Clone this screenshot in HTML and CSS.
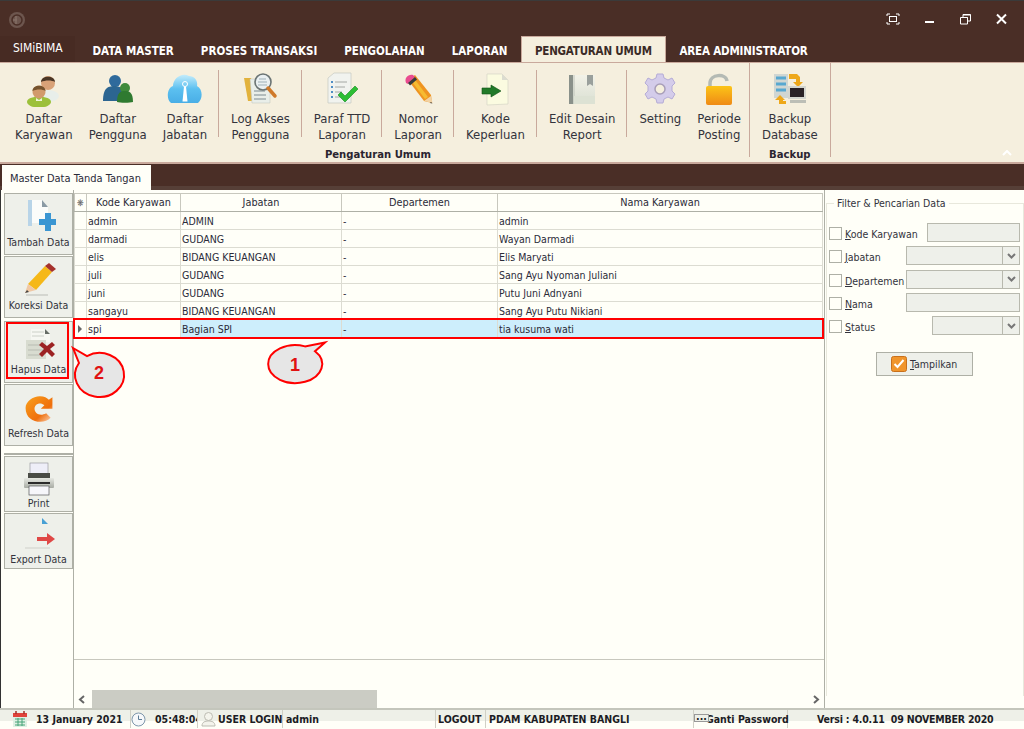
FILE: index.html
```html
<!DOCTYPE html>
<html lang="id">
<head>
<meta charset="utf-8">
<title>SIMiBIMA</title>
<link rel="stylesheet" href="styles.css">
</head>
<body>
<svg class="defs" width="0" height="0" aria-hidden="true">
  <defs>
    <linearGradient id="gBlue" x1="0" y1="0" x2="0" y2="1"><stop offset="0" stop-color="#c4ecfb"/><stop offset=".5" stop-color="#5cc0f0"/><stop offset="1" stop-color="#49aee6"/></linearGradient>
    <linearGradient id="gOrange" x1="0" y1="0" x2="0" y2="1"><stop offset="0" stop-color="#fcc417"/><stop offset="1" stop-color="#ef8a16"/></linearGradient>
    <linearGradient id="gRefresh" x1="0" y1="0" x2="1" y2="1"><stop offset="0" stop-color="#f9a11c"/><stop offset=".65" stop-color="#ef6f0c"/><stop offset="1" stop-color="#fbd9c0"/></linearGradient>
    <linearGradient id="gBook" x1="0" y1="0" x2="0" y2="1"><stop offset="0" stop-color="#f2f2e8"/><stop offset="1" stop-color="#dadfd2"/></linearGradient>
    <linearGradient id="gGrey" x1="0" y1="0" x2="0" y2="1"><stop offset="0" stop-color="#e6e8e2"/><stop offset="1" stop-color="#a8aca4"/></linearGradient>
  </defs>
</svg>
<div class="app">
  <header class="titlebar">
    <svg class="logo" width="18" height="18" viewBox="0 0 18 18"><circle cx="9" cy="9" r="8" fill="#6d564e"/><circle cx="9" cy="9" r="5" fill="none" stroke="#4a2e26" stroke-width="1.500"/><path d="M8 5v8M5 9h4" stroke="#836d64" stroke-width="1.500"/></svg>
    <div class="winctl">
      <svg width="14" height="12" viewBox="0 0 14 12"><path d="M1 3V1h3M10 1h3v2M13 9v2h-3M4 11H1V9" fill="none" stroke="#fff"/><rect x="3.500" y="3.500" width="7" height="5" fill="none" stroke="#fff"/></svg>
      <svg width="10" height="12" viewBox="0 0 10 12"><rect x="0" y="8" width="9" height="2" fill="#fff"/></svg>
      <svg width="11" height="12" viewBox="0 0 11 12"><path d="M.5 4.500h7v6.500h-7zM3 4V1.500h7.500V8H8" fill="none" stroke="#fff"/><path d="M1 4.500h6.500M3 2h7.500" stroke="#fff"/></svg>
      <svg width="11" height="12" viewBox="0 0 11 12"><path d="M1 1.500l9 9M10 1.500l-9 9" stroke="#fff" stroke-width="2"/></svg>
    </div>
  </header>
  <nav class="tabs">
    <div class="tab-app">SIMiBIMA</div>
    <div class="tab">DATA MASTER</div>
    <div class="tab">PROSES TRANSAKSI</div>
    <div class="tab">PENGOLAHAN</div>
    <div class="tab">LAPORAN</div>
    <div class="tab tab-active">PENGATURAN UMUM</div>
    <div class="tab tab-tight">AREA ADMINISTRATOR</div>
  </nav>
  <section class="ribbon">
    <div class="group">
      <div class="group-row">
        <div class="ritem">
          <svg class="ricon" width="36" height="36" viewBox="0 0 36 36"><ellipse cx="22" cy="25" rx="11" ry="6" fill="#e8eeea"/><circle cx="22" cy="12" r="7" fill="#d9a278"/><path d="M15 11c0-7 14-7 14 0-3-2-10-2-14 0z" fill="#4a3626"/><ellipse cx="13" cy="31" rx="12" ry="5.500" fill="#9cc03a"/><circle cx="13" cy="21" r="6.500" fill="#d19a6c"/><path d="M6.500 20c0-7 13-7 13 0-3-2-9-2-13 0z" fill="#75522c"/><path d="M10 27l3 2 3-2v3h-6z" fill="#eef4d8"/></svg>
          <span class="rlabel">Daftar<br>Karyawan</span>
        </div>
        <div class="ritem">
          <svg class="ricon" width="36" height="36" viewBox="0 0 36 36"><circle cx="15" cy="10" r="6" fill="#2f6a9c"/><path d="M3 30c0-14 6-15 12-15s10 3 10 15z" fill="#2c6591"/><circle cx="25" cy="17" r="5" fill="#3f8a3a"/><path d="M17 31c0-10 4-11 8-11s8 1 8 11c-3 1-13 1-16 0z" fill="#2f7a30"/></svg>
          <span class="rlabel">Daftar<br>Pengguna</span>
        </div>
        <div class="ritem">
          <svg class="ricon" width="36" height="36" viewBox="0 0 36 36"><path d="M4 32C-1 28 0 17 6 15 6 7 15 1 22 5c6 0 9 5 8 10 6 3 6 13 1 17z" fill="url(#gBlue)"/><circle cx="18" cy="13" r="2.500" fill="none" stroke="#fff"/><path d="M17 15.500h2l1.500 15h-5z" fill="#fff"/></svg>
          <span class="rlabel">Daftar<br>Jabatan</span>
        </div>
        <div class="rsep"></div>
        <div class="ritem">
          <svg class="ricon" width="36" height="36" viewBox="0 0 36 36"><path d="M2 7h7l1 3v20H6z" fill="#e2b23c"/><path d="M8 8h14l6 6v18H10z" fill="#e9eee9" stroke="#bcc0b8" stroke-width=".5"/><path d="M12 20h11M12 24h12M12 28h12" stroke="#7d8a90"/><circle cx="21" cy="11" r="8" fill="#eaf0f2" stroke="#6b7474" stroke-width="1.600"/><path d="M16 11h9M16 14h9M17 8h7" stroke="#9fb0b8"/><path d="M26 17l7 8" stroke="#d07a2a" stroke-width="3.500" stroke-linecap="round"/></svg>
          <span class="rlabel">Log Akses<br>Pengguna</span>
        </div>
        <div class="rsep"></div>
        <div class="ritem">
          <svg class="ricon" width="36" height="36" viewBox="0 0 36 36"><path d="M4 7l6-5h17v30H4z" fill="#f1f3ef" stroke="#c4c8c2" stroke-width=".7"/><path d="M7 10h2v2H7zM7 15h2v2H7zM7 20h2v2H7zM7 25h2v2H7z" fill="#4f8ec4"/><path d="M11 11h12M11 16h10M11 21h7M11 26h5" stroke="#a4a8a4"/><path d="M14 24l3-3 4 4 10-10 3 3-13 13z" fill="#2dbe34" stroke="#148a1e" stroke-width=".6"/></svg>
          <span class="rlabel">Paraf TTD<br>Laporan</span>
        </div>
        <div class="rsep"></div>
        <div class="ritem">
          <svg class="ricon" width="36" height="36" viewBox="0 0 36 36"><path d="M8 9l7-5 16 20 1 8-8-2z" fill="#ef9420"/><path d="M13 6l-3 2 15 20 3-2z" fill="#f6bb30"/><path d="M24 30l7-5 1.500 7z" fill="#f1d2a4"/><path d="M31 31l1.500 1.500-2.500-.5z" fill="#333"/><path d="M6 12c-2-5 2-9 7-8l2 2-7 7z" fill="#e94c8f"/><path d="M8 12l7-6 2 2.500-7 6z" fill="#3a3a3a"/></svg>
          <span class="rlabel">Nomor<br>Laporan</span>
        </div>
        <div class="rsep"></div>
        <div class="ritem">
          <svg class="ricon" width="36" height="36" viewBox="0 0 36 36"><path d="M10 3h15l6 6v24l-21 1z" fill="#fbfbe0" stroke="#d6d6c6" stroke-width=".7"/><path d="M25 3v6h6z" fill="#dcdcd0"/><path d="M5 17h9v-3l10 6-10 6v-3H5z" fill="#217a28" stroke="#0f5216" stroke-width=".6"/></svg>
          <span class="rlabel">Kode<br>Keperluan</span>
        </div>
        <div class="rsep"></div>
        <div class="ritem">
          <svg class="ricon" width="36" height="36" viewBox="0 0 36 36"><rect x="5" y="4" width="26" height="29" fill="url(#gBook)"/><rect x="5" y="4" width="4" height="29" fill="#8a918a"/><path d="M10 4v29" stroke="#bfc4ba"/><path d="M23 4h6v11l-3-2-3 2z" fill="#9aa09c"/><rect x="10" y="25" width="21" height="8" fill="#dde2d4"/></svg>
          <span class="rlabel">Edit Desain<br>Report</span>
        </div>
        <div class="rsep"></div>
        <div class="ritem">
          <svg class="ricon" width="36" height="36" viewBox="0 0 36 36"><path d="M15 3h6l1 4 4 2 4-2 3 5-3 3v5l3 3-3 5-4-2-4 2-1 4h-6l-1-4-4-2-4 2-3-5 3-3v-5l-3-3 3-5 4 2 4-2z" fill="#d4ccea" stroke="#b5acd6"/><circle cx="18" cy="18" r="5" fill="#f5efde" stroke="#a89eb8" stroke-width="1.500"/></svg>
          <span class="rlabel">Setting</span>
        </div>
        <div class="ritem">
          <svg class="ricon" width="36" height="36" viewBox="0 0 36 36"><path d="M9 17v-5c0-9 16-10 17-2" fill="none" stroke="#b4bab4" stroke-width="3.500"/><rect x="5" y="15" width="26" height="19" rx="2" fill="url(#gOrange)"/></svg>
          <span class="rlabel">Periode<br>Posting</span>
        </div>
      </div>
      <div class="group-name">Pengaturan Umum</div>
    </div>
    <div class="gsep"></div>
    <div class="group">
      <div class="group-row">
        <div class="ritem ritem-wide">
          <svg class="ricon" width="36" height="36" viewBox="0 0 36 36"><rect x="2" y="3" width="14" height="24" fill="#d0d6d2"/><path d="M4 7h10M4 13h10M4 19h10" stroke="#58a8d0" stroke-width="3"/><path d="M17 3h8l3 3v5h3l-5 5-5-5h3V8h-7z" fill="#eea81a"/><rect x="16" y="15" width="18" height="13" fill="#d4d6cf"/><rect x="18" y="17" width="14" height="9" fill="#2a2226"/><rect x="18" y="29" width="16" height="3" fill="#bcbeb6"/><path d="M14 33H7v-4H3l5-5 5 5h-2v1h3z" fill="#eea81a"/></svg>
          <span class="rlabel">Backup<br>Database</span>
        </div>
      </div>
      <div class="group-name">Backup</div>
    </div>
    <div class="gsep"></div>
    <svg class="collapse" width="10" height="6" viewBox="0 0 10 6"><path d="M1 5l4-4 4 4" fill="none" stroke="#fff" stroke-width="2"/></svg>
  </section>
  <div class="doctabs">
    <div class="doctab">Master Data Tanda Tangan</div>
  </div>
  <main class="content">
    <aside class="toolbar">
      <div class="tool">
        <svg width="34" height="34" viewBox="0 0 34 34"><path d="M6 1h14l6 7v16H6z" fill="#fbfcfa"/><rect x="6" y="1" width="4" height="26" fill="#b8d4e8"/><path d="M20 1l6 7h-6z" fill="#8a9aa4"/><path d="M17 20h6v-6h6v6h5v6h-5v6h-6v-6h-6z" fill="#3b96d2"/></svg>
        <span>Tambah Data</span>
      </div>
      <div class="tool">
        <svg width="34" height="34" viewBox="0 0 34 34"><path d="M23 4l7 6-16 18-8-6z" fill="#f5b818"/><path d="M23 4l4-3 7 6-4 3z" fill="#a5312c"/><path d="M6 22l8 6-11 3z" fill="#f0c8a4"/><path d="M3 31L5 28 7 30z" fill="#444"/><path d="M4 33h22" stroke="#d4d6d0" stroke-width="2"/></svg>
        <span>Koreksi Data</span>
      </div>
      <div class="tool tool-gap">
        <svg width="34" height="34" viewBox="0 0 34 34"><path d="M9 3h14l5 5v8H9z" fill="#f6f7f2"/><path d="M23 3l5 5h-5z" fill="#666c66"/><path d="M10 6h12M10 10h12" stroke="#ccd0c8"/><rect x="4" y="14" width="20" height="19" fill="#d8dcd0"/><path d="M6 19h16M6 24h16M6 29h16" stroke="#b8bcb2"/><path d="M20 16l5 4 5-4 3 3-5 4 5 5-3 3-5-5-5 5-3-3 5-5-5-4z" fill="#9c2323"/></svg>
        <span>Hapus Data</span>
      </div>
      <div class="tool">
        <svg width="34" height="34" viewBox="-3 -4 38 38"><path d="M17 3c5 0 8 2 10 4l4-3v13H18l4-4c-5-4-11-1-11 4s6 9 13 5l5 5c-7 8-28 6-28-11C1 9 9 3 17 3z" fill="url(#gRefresh)"/></svg>
        <span>Refresh Data</span>
      </div>
      <div class="tool-spacer"></div>
      <div class="tool tool-short">
        <svg width="34" height="34" viewBox="0 0 34 34"><rect x="8" y="1" width="18" height="12" fill="#eeeef8" stroke="#8c8e94" stroke-width=".6"/><rect x="6" y="11" width="22" height="6" fill="#4a4c46"/><rect x="2" y="16" width="30" height="10" rx="1" fill="url(#gGrey)"/><rect x="6" y="20" width="22" height="2" fill="#2a2a2a"/><rect x="7" y="24" width="20" height="9" fill="#f6f6fa" stroke="#56585a" stroke-width=".7"/></svg>
        <span>Print</span>
      </div>
      <div class="tool tool-short tool-export">
        <svg width="34" height="34" viewBox="0 0 34 34"><path d="M20 0l6 6h-6z" fill="#48a0d4"/><path d="M15 19h10v-4l8 6-8 6v-4H15z" fill="#df4846"/><path d="M3 30h25" stroke="#cfd0ca"/></svg>
        <span>Export Data</span>
      </div>
    </aside>
    <section class="gridpane">
      <table class="grid">
        <colgroup><col class="c0"><col class="c1"><col class="c2"><col class="c3"><col></colgroup>
        <thead>
          <tr><th class="star">❋</th><th>Kode Karyawan</th><th>Jabatan</th><th>Departemen</th><th>Nama Karyawan</th></tr>
        </thead>
        <tbody>
          <tr><td></td><td>admin</td><td>ADMIN</td><td>-</td><td>admin</td></tr>
          <tr><td></td><td>darmadi</td><td>GUDANG</td><td>-</td><td>Wayan Darmadi</td></tr>
          <tr><td></td><td>elis</td><td>BIDANG KEUANGAN</td><td>-</td><td>Elis Maryati</td></tr>
          <tr><td></td><td>juli</td><td>GUDANG</td><td>-</td><td>Sang Ayu Nyoman Juliani</td></tr>
          <tr><td></td><td>juni</td><td>GUDANG</td><td>-</td><td>Putu Juni Adnyani</td></tr>
          <tr><td></td><td>sangayu</td><td>BIDANG KEUANGAN</td><td>-</td><td>Sang Ayu Putu Nikiani</td></tr>
          <tr class="sel"><td class="ind"><span class="arrow"></span></td><td class="focus">spi</td><td>Bagian SPI</td><td>-</td><td>tia kusuma wati</td></tr>
        </tbody>
      </table>
      <div class="grid-empty"></div>
      <div class="grid-footer"></div>
      <div class="hscroll">
        <svg class="sarrow" width="7" height="9" viewBox="0 0 7 9"><path d="M6 1L2 4.500 6 8" fill="none" stroke="#666" stroke-width="2"/></svg>
        <div class="track"><div class="thumb"></div></div>
        <svg class="sarrow" width="7" height="9" viewBox="0 0 7 9"><path d="M1 1l4 3.500L1 8" fill="none" stroke="#666" stroke-width="2"/></svg>
      </div>
    </section>
    <aside class="filter">
      <fieldset class="fset">
        <legend>Filter &amp; Pencarian Data</legend>
        <div class="frow"><span class="cb"></span><span class="flabel"><u>K</u>ode Karyawan</span><span class="field w93"></span></div>
        <div class="frow"><span class="cb"></span><span class="flabel"><u>J</u>abatan</span><span class="field w114 combo"><i class="drop"><svg width="9" height="6" viewBox="0 0 9 6"><path d="M1 1l3.500 3.500L8 1" fill="none" stroke="#777" stroke-width="2"/></svg></i></span></div>
        <div class="frow"><span class="cb"></span><span class="flabel"><u>D</u>epartemen</span><span class="field w114 combo"><i class="drop"><svg width="9" height="6" viewBox="0 0 9 6"><path d="M1 1l3.500 3.500L8 1" fill="none" stroke="#777" stroke-width="2"/></svg></i></span></div>
        <div class="frow"><span class="cb"></span><span class="flabel"><u>N</u>ama</span><span class="field w114"></span></div>
        <div class="frow"><span class="cb"></span><span class="flabel"><u>S</u>tatus</span><span class="field w88 combo"><i class="drop"><svg width="9" height="6" viewBox="0 0 9 6"><path d="M1 1l3.500 3.500L8 1" fill="none" stroke="#777" stroke-width="2"/></svg></i></span></div>
        <div class="showbtn">
          <svg width="16" height="16" viewBox="0 0 16 16"><rect x=".5" y=".5" width="15" height="15" rx="2" fill="#f0952c" stroke="#c8701c"/><path d="M3.500 8l3 3 6-7" fill="none" stroke="#fff" stroke-width="2"/></svg>
          <span><u>T</u>ampilkan</span>
        </div>
      </fieldset>
    </aside>
  </main>
  <footer class="status">
    <div class="cell s-date">
      <svg width="14" height="16" viewBox="0 0 14 16"><rect x="0" y="2" width="14" height="14" fill="#dff0e4"/><rect x="0" y="2" width="14" height="4" fill="#e0443c"/><path d="M2 8h10M2 11h10M2 14h10M5 7v8M9 7v8" stroke="#46a478"/><path d="M3 0v3M11 0v3" stroke="#a03028" stroke-width="1.500"/></svg>
      <b>13 January 2021</b>
    </div>
    <div class="cell s-time">
      <svg width="15" height="15" viewBox="0 0 15 15"><circle cx="7.500" cy="7.500" r="6.500" fill="#f6f8fa" stroke="#7e97ac"/><path d="M7.500 3.500v4h3.500" fill="none" stroke="#5c7c96"/></svg>
      <b>05:48:04</b>
    </div>
    <div class="cell s-user">
      <svg width="15" height="16" viewBox="0 0 15 16"><circle cx="7.500" cy="5.500" r="4" fill="#f4f4ec" stroke="#bcbcb2"/><path d="M1 15c0-4 3-5 6.500-5s6.500 1 6.500 5z" fill="#f4f4ec" stroke="#bcbcb2"/></svg>
      <b>USER LOGIN</b>
    </div>
    <div class="cell s-admin"><b>admin</b></div>
    <div class="cell s-logout"><b>LOGOUT</b></div>
    <div class="cell s-pdam"><b>PDAM KABUPATEN BANGLI</b></div>
    <div class="cell s-ganti"><span class="dots">...</span><b>Ganti Password</b></div>
    <div class="cell s-versi"><b>Versi : 4.0.11&nbsp; 09 NOVEMBER 2020</b></div>
  </footer>
</div>
<svg class="notes" width="1024" height="729" viewBox="0 0 1024 729">
  <rect class="mark" x="74" y="319" width="749" height="19"/>
  <rect class="mark" x="7" y="323" width="61" height="55"/>
  <path class="bubble" d="M325 342.500L315 351.200A27 19 0 1 1 305 346.400Z"/>
  <text class="num" x="295" y="371">1</text>
  <path class="bubble" d="M73 348L87 356.100A24.500 22 0 1 1 79 363Z"/>
  <text class="num" x="99" y="379">2</text>
</svg>
</body>
</html>
```
FILE: styles.css
```css
* { box-sizing: border-box; }
html, body { margin: 0; padding: 0; }
body {
  width: 1024px;
  height: 729px;
  overflow: hidden;
  position: relative;
  background: #4a2e26;
  font-family: "DejaVu Sans", "Liberation Sans", Arial, sans-serif;
  font-stretch: condensed;
  font-size: 10.500px;
  color: #2b2b38;
}
.defs { position: absolute; }
.app {
  display: flex;
  flex-direction: column;
  width: 1024px;
  height: 729px;
  border-top: 1px solid #3a3a3a;
}

/* title bar */
.titlebar {
  height: 35px;
  flex: none;
  display: flex;
  align-items: center;
  justify-content: space-between;
  padding: 0 17px 0 8px;
}
.winctl { display: flex; align-items: center; gap: 25px; }
.winctl svg { display: block; }
.logo { display: block; margin-top: 2px; }

/* tabs */
.tabs {
  height: 26px;
  flex: none;
  display: flex;
  align-items: flex-end;
  color: #fff;
  font-size: 11.500px;
  font-weight: bold;
}
.tab-app {
  width: 75px;
  height: 26px;
  line-height: 25px;
  padding-left: 13px;
  font-size: 12px;
  font-weight: normal;
  background: #472b23;
  margin-right: 4px;
}
.tab { height: 25px; line-height: 28px; padding: 0 13.500px; white-space: nowrap; }
.tab-tight { letter-spacing: -.17px; }
.tab-active {
  line-height: 29px;
  padding: 0 13px;
  margin: 0 0 -1px 0;
  height: 27px;
  background: #f5efde;
  color: #3a2a26;
  letter-spacing: -.2px;
  border: 1px solid #c9a99c;
  border-bottom: 0;
  position: relative;
}

/* ribbon */
.ribbon {
  height: 102px;
  flex: none;
  display: flex;
  position: relative;
  background: #f5efde;
  border-top: 1px solid #c9a99c;
  border-bottom: 2px solid #c9a99c;
  padding-left: 7px;
  font-size: 13px;
}
.group { display: flex; flex-direction: column; }
.group-row { display: flex; flex-wrap: nowrap; }
.ritem { display: flex; flex-direction: column; align-items: center; padding: 8px 8px 0; height: 84px; }
.ritem-wide { padding: 8px 12px 0; }
.ricon { display: block; flex: none; margin-bottom: 4px; }
.rlabel { line-height: 16px; text-align: center; white-space: nowrap; color: #33333c; }
.rsep { width: 1px; height: 67px; margin: 7px 4px 0 3px; background: #c9a99c; }
.gsep { width: 1px; height: 94px; background: #c9a99c; }
.group-name {
  text-align: center;
  font-size: 11.200px;
  font-weight: bold;
  line-height: 16px;
  color: #2a2430;
}
.collapse { position: absolute; right: 12px; bottom: 6px; }

/* document tab strip */
.doctabs {
  height: 26px;
  flex: none;
  padding: 1px 0 0 2px;
  background: linear-gradient(#4a2e26 0 22px, #563f37 22px);
}
.doctab {
  width: 149px;
  height: 25px;
  padding: 7px 0 0 8px;
  background: #fffff8;
  font-size: 11px;
}

/* main */
.content {
  flex: 1;
  min-height: 0;
  display: flex;
  background: #fffff8;
  padding-left: 3px;
  border-left: 1px solid #333;
}
.toolbar {
  width: 70px;
  flex: none;
  padding-top: 3px;
  display: flex;
  flex-direction: column;
  gap: 1px;
  border-right: 1px solid #aeb0a6;
}
.tool {
  width: 69px;
  height: 62px;
  flex: none;
  display: flex;
  flex-direction: column;
  align-items: center;
  justify-content: flex-end;
  padding-bottom: 6px;
  gap: 3px;
  background: #eef0ea;
  border: 1px solid #aeb0a6;
  color: #33333c;
}
.tool svg { display: block; }
.tool-gap { margin-top: 2px; padding-bottom: 7px; }
.tool-short { height: 56px; padding-bottom: 2px; gap: 1px; }
.tool-export { padding-bottom: 3px; }
.tool-spacer { height: 8px; border-bottom: 2px solid #aeb0a6; }

/* grid */
.gridpane {
  width: 751px;
  flex: none;
  display: flex;
  flex-direction: column;
  padding-top: 3px;
  border-right: 1px solid #aeb0a6;
}
.grid { width: 749px; table-layout: fixed; border-collapse: collapse; flex: none; }
.c0 { width: 12px; }
.c1 { width: 94px; }
.c2 { width: 161px; }
.c3 { width: 156px; }
.grid th {
  height: 18px;
  padding: 0;
  font-size: 10.800px;
  font-weight: normal;
  text-align: center;
  background: #fffff8;
  border: 1px solid #c8c8be;
  border-bottom: 1px solid #aeb0a6;
}
.grid .star { font-size: 9px; color: #666; }
.grid td {
  height: 18px;
  padding: 0 1px;
  white-space: nowrap;
  overflow: hidden;
  border: 1px solid #dcdcd2;
}
.sel td { background: #cdeefc; }
.sel .ind, .sel .focus { background: #fffff8; }
.sel td { border-top: 1px dotted #222; border-bottom: 1px dotted #222; }
.ind { position: relative; }
.arrow {
  display: block;
  width: 0;
  height: 0;
  margin-left: 2px;
  border-left: 4px solid #666;
  border-top: 4px solid transparent;
  border-bottom: 4px solid transparent;
}
.grid-empty { flex: 1; border-bottom: 1px solid #c8c8be; }
.grid-footer { height: 30px; flex: none; }
.hscroll { height: 18px; flex: none; display: flex; align-items: center; padding: 0 4px; }
.track { flex: 1; height: 18px; padding-left: 7px; }
.thumb { width: 285px; height: 18px; background: #cbccc4; }
.sarrow { display: block; flex: none; }

/* filter */
.filter { flex: 1; min-width: 0; padding: 7px 0 0 1px; }
.fset {
  margin: 0;
  padding: 14px 3px 0 2px;
  min-width: 0;
  height: 499px;
  border: 1px solid #e8e8dc;
  border-bottom: 0;
  display: flex;
  flex-direction: column;
  gap: 4.300px;
}
.fset legend { margin-left: 5px; padding: 0 3px; color: #33333c; }
.frow { display: flex; align-items: center; height: 19px; flex: none; }
.cb { width: 13px; height: 13px; flex: none; background: #fffff8; border: 1px solid #aeb0a6; margin: 2px 3px 0 0; }
.flabel { white-space: nowrap; color: #33333c; margin-top: 3px; }
.field { height: 19px; margin-left: auto; flex: none; background: #eef0ea; border: 1px solid #b8b9ae; }
.w93 { width: 93px; }
.w114 { width: 114px; }
.w88 { width: 88px; }
.combo { display: flex; justify-content: flex-end; }
.drop {
  width: 17px;
  display: flex;
  align-items: center;
  justify-content: center;
  border-left: 1px solid #b8b9ae;
}
.showbtn {
  width: 97px;
  height: 24px;
  flex: none;
  margin: 13px 0 0 47px;
  display: flex;
  align-items: center;
  padding-left: 14px;
  gap: 3px;
  background: #eef0ea;
  border: 1px solid #aeb0a6;
  color: #33333c;
}
.showbtn svg { display: block; }

/* status bar */
.status {
  height: 21px;
  flex: none;
  display: flex;
  padding-bottom: 1px;
  background: linear-gradient(#eef0e8 0 11px, #fffff8 11px);
  border-top: 2px solid #c4c6bc;
  color: #1c1c24;
}
.cell {
  display: flex;
  align-items: center;
  overflow: hidden;
  white-space: nowrap;
  border-left: 1px solid #d0d0c6;
  flex: none;
}
.cell b { font-weight: bold; }
.cell svg { flex: none; display: block; }
.s-date { width: 130px; padding-left: 13px; gap: 9px; border-left: 0; }
.s-time { width: 67px; gap: 9px; }
.s-user { width: 85px; padding-left: 3px; gap: 2px; }
.s-admin { width: 153px; padding-left: 3px; }
.s-logout { width: 50px; padding-left: 2px; }
.s-pdam { width: 208px; padding-left: 3px; }
.s-ganti { width: 94px; position: relative; padding-left: 12px; overflow: visible; }
.dots {
  position: absolute;
  left: 0;
  top: 4px;
  width: 15px;
  height: 8px;
  line-height: 3px;
  text-align: center;
  font-weight: bold;
  background: #eef0e8;
  border: 1px solid #999;
}
.s-versi { flex: 1; padding-left: 29px; letter-spacing: -.2px; }

/* annotation overlay */
.notes { position: absolute; left: 0; top: 0; pointer-events: none; }
.mark { fill: none; stroke: #f00; stroke-width: 2; }
.bubble { fill: #e6e6e6; stroke: #f00; stroke-width: 2; }
.num {
  font-family: "Liberation Sans", Arial, sans-serif;
  font-size: 18px;
  font-weight: bold;
  fill: #e01212;
  text-anchor: middle;
}
```
